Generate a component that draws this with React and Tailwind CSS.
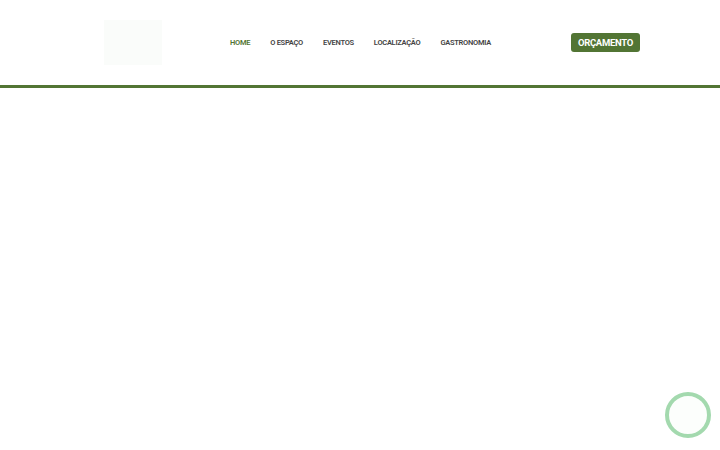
import React from 'react';

const links = ['Home', 'O Espaço', 'Eventos', 'Localização', 'Gastronomia'];

const App = () => {
  return (
    <div className="relative h-[450px] w-[720px] overflow-hidden bg-white font-['Roboto',sans-serif]">
      <header className="flex h-[88px] items-center border-b-[3px] border-[#527534] pl-[104px] pr-[80px]">
        <div className="h-[45px] w-[58px] bg-[#fafcfa]"></div>
        <nav className="ml-[68px] flex gap-[20px]">
          {links.map((link, i) => (
            <a
              key={link}
              className={`text-[7.5px] leading-[12px] font-semibold tracking-[-0.28px] uppercase ${i === 0 ? 'text-[#527534]' : 'text-[#444444]'}`}
            >
              {link}
            </a>
          ))}
        </nav>
        <a className="ml-auto rounded-[3px] bg-[#527534] px-[7px] py-[3px] text-[9.5px] leading-[13px] font-bold tracking-[-0.3px] text-white uppercase">
          Orçamento
        </a>
      </header>
      <div className="absolute top-[392px] left-[665px] size-[46px] rounded-full border-4 border-[#a3d9ae] bg-[#fcfefc]"></div>
    </div>
  );
};

export default App;
